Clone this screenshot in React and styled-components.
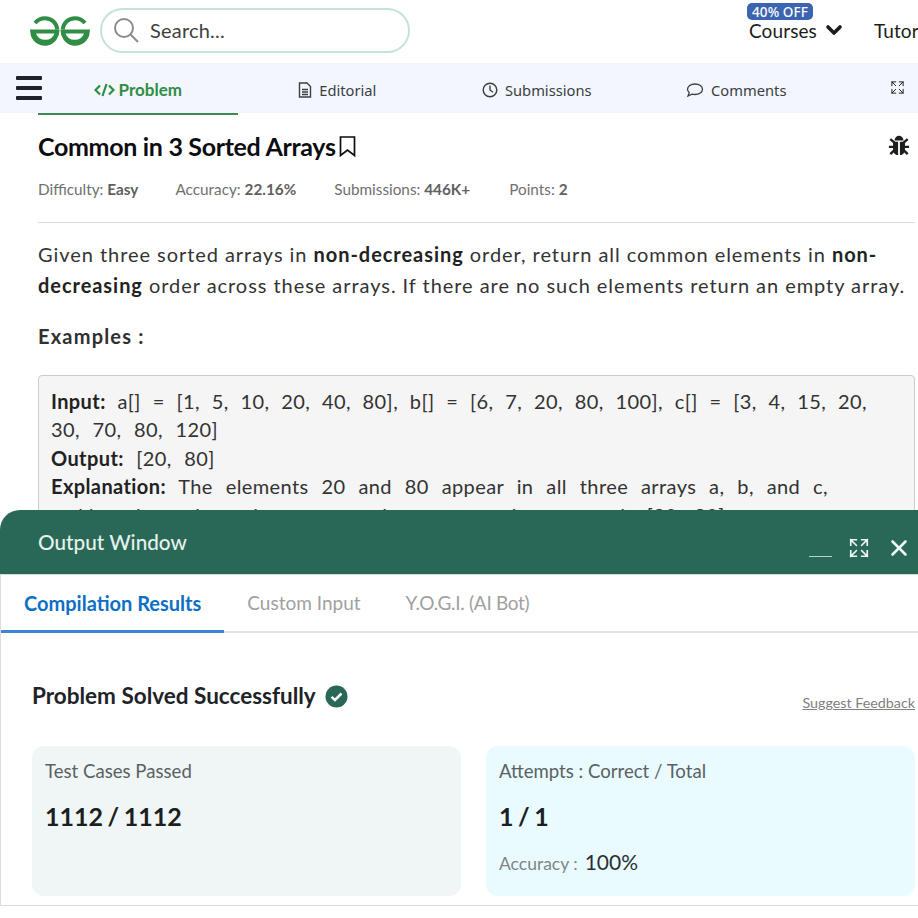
import React from "react";
import styled, { createGlobalStyle } from "styled-components";
import { ChevronDown, X } from "lucide-react";

const Global = createGlobalStyle`
  html, body { margin: 0; padding: 0; background: #fff; }
  * { box-sizing: border-box; }
  body { font-family: "Lato", "Noto Sans", sans-serif; }
`;
const round = `"Lato", "Noto Sans", sans-serif`;
const noto = `"Noto Sans", "Liberation Sans", sans-serif`;

const Page = styled.div`
  position: relative; width: 918px; height: 918px; overflow: hidden; background: #fff;
`;
const TopBar = styled.header`
  height: 63px; display: flex; align-items: flex-start; padding-left: 30px; position: relative; overflow: hidden;
`;
const Logo = styled.svg`
  width: 60px; height: 30px; margin-top: 16px; flex: none;
`;
const SearchBox = styled.div`
  width: 310px; height: 45px; margin: 8px 0 0 10px; border: 2px solid #c7e3d5; border-radius: 23px;
  display: flex; align-items: center; padding-left: 11px; gap: 10px;
  font: 400 20px/24px ${round}; letter-spacing: 0.2px; color: #3f3f3f; flex: none;
  span { margin-top: -2px; }
`;
const NavLinks = styled.nav`
  margin-left: 339px; display: flex; gap: 28px; flex: none; padding-top: 19px;
`;
const NavLink = styled.div`
  position: relative; display: flex; align-items: center; gap: 5px; height: 22px;
  font: 400 19px ${round}; letter-spacing: 0.1px; color: #1c1c1c; white-space: nowrap;
`;
const Badge = styled.span`
  position: absolute; left: -2px; top: -16px; height: 17px; width: 66px; background: #3b65b0; color: #fff;
  border-radius: 5px; font: 500 13.5px ${noto}; display: flex; align-items: center; justify-content: center;
`;
const TabBar = styled.div`
  height: 50px; background: #f3f6fc; display: flex; padding-left: 38px; position: relative;
`;
const Hamburger = styled.div`
  position: absolute; left: 16px; top: 13px; width: 26px; height: 24px;
  display: flex; flex-direction: column; justify-content: space-between;
  span { display: block; height: 4px; background: #1e2229; border-radius: 1px; }
`;
const Tab = styled.div`
  width: 199.5px; height: 52px; padding-top: ${p => (p.$active ? 3 : 4)}px; display: flex; align-items: center; justify-content: center; gap: ${p => p.$gap || 7}px;
  font: ${p => (p.$active ? `700 17px ${round}` : `400 14.7px ${noto}`)};
  color: ${p => (p.$active ? "#2f8d46" : "#3a3f45")};
  border-bottom: 2px solid ${p => (p.$active ? "#3d8b50" : "transparent")};
`;
const ExpandSlot = styled.div`
  margin-left: auto; padding: 16px 13px 0 0; color: #22262b;
`;
const Problem = styled.section`
  padding: 0 3px 0 38px;
`;
const TitleRow = styled.div`
  height: 66px; padding-top: 16px; display: flex; align-items: flex-start; justify-content: space-between;
`;
const Title = styled.h1`
  margin: 0; display: flex; align-items: center; gap: 3px; font: 700 25px/34px ${round}; letter-spacing: -0.32px; color: #0c0d10;
`;
const Bug = styled.svg`
  width: 22px; height: 22px; margin: 5px 5px 0 0;
`;
const Meta = styled.div`
  display: flex; height: 44px; border-bottom: 1px solid #dedede;
`;
const MetaItem = styled.div`
  font: 400 15.300px/20px ${round}; color: #707070; white-space: pre; margin-right: ${p => p.$gap}px;
  b { font-weight: 700; color: #606060; }
`;
const Para = styled.p`
  margin: 16px 0 0; font: 400 20px/31px ${round}; color: #333; width: 874px; letter-spacing: 0.95px;
  b { font-weight: 700; color: #222; }
`;
const Sub = styled.h3`
  margin: 20px 0 0; font: 700 20px/31px ${round}; letter-spacing: 1.2px; color: #303030;
`;
const Example = styled.div`
  margin-top: 23px; height: 200px; background: #f5f5f5; border: 1px solid #ccc; border-radius: 4px;
  padding: 11px 12px; font: 400 20px/28.4px ${round}; letter-spacing: 0.4px; color: #333;
  b { font-weight: 700; color: #222; }
`;
const Justified = styled.div`
  text-align: justify; text-align-last: justify; padding-right: ${p => p.$pr}px;
`;
const OutputLine = styled.div`
  word-spacing: 7px;
`;
const Output = styled.section`
  position: absolute; left: 0; top: 510px; width: 918px; height: 396px; background: #fff;
  border-left: 1px solid #ddd; border-bottom: 1px solid #ddd; border-radius: 20px 0 0 0;
`;
const OutHead = styled.div`
  margin-left: -1px; height: 65px; background: #296857; border-radius: 20px 0 0 0; display: flex; align-items: center;
  padding: 0 6px 0 38px; color: #eef6f3; border-bottom: 1px solid #cfe0da;
`;
const OutTitle = styled.div`
  font: 500 20.700px ${round}; color: #e6f1ed;
`;
const WinTools = styled.div`
  margin-left: auto; display: flex; align-items: center; gap: 16px; padding-top: 11px;
`;
const MinBar = styled.span`
  display: block; width: 23px; height: 1.500px; background: #b8d2c9; margin-top: 18px;
`;
const OutTabs = styled.div`
  height: 58px; display: flex; border-bottom: 2px solid #e2e2e2;
`;
const OutTab = styled.div`
  height: 58px; margin-bottom: -2px; padding: 0 ${p => p.$pr}px 0 ${p => p.$pl}px; display: flex; align-items: center;
  font: ${p => (p.$active ? "700 20px" : "400 19px")} ${round}; letter-spacing: ${p => p.$ls || 0}px; color: ${p => (p.$active ? "#0d6fc4" : "#a0a0a0")};
  border-bottom: 3px solid ${p => (p.$active ? "#3d85d0" : "transparent")}; white-space: nowrap;
`;
const Result = styled.div`
  padding: 0 2px 0 31px;
`;
const ResultHead = styled.div`
  height: 113px; display: flex; align-items: flex-start; justify-content: space-between;
`;
const Solved = styled.div`
  margin-top: 48px; display: flex; align-items: center; gap: 9px; font: 700 22.500px/30px ${round}; color: #1e2328;
`;
const Feedback = styled.a`
  margin-top: 60px; margin-right: 1px; font: 400 14.300px/20px ${round}; color: #808080; text-decoration: underline;
`;
const Cards = styled.div`
  display: grid; grid-template-columns: 429px 429px; gap: 25px;
`;
const Card = styled.div`
  height: 150px; border-radius: 12px; background: ${p => p.$bg}; padding: 12px 13px;
`;
const CardLabel = styled.div`
  font: 400 18.600px/26px ${round}; color: #5a6163;
`;
const CardValue = styled.div`
  margin-top: 17px; font: 700 25px/30px ${round}; word-spacing: -1.500px; color: #1b1f22;
`;
const AccRow = styled.div`
  margin-top: 18px; display: flex; align-items: baseline; gap: 7px;
  font: 400 17.500px/26px ${round}; color: #7f8688;
  b { font-weight: 400; font-size: 21px; color: #2a2f33; }
`;

const Expand = ({ size, w = 1.6 }) => (
  <svg width={size} height={size} viewBox="0 0 24 24" fill="none" stroke="currentColor" strokeWidth={w} strokeLinecap="square">
    <path d="M3 9V3h6M3 3l6 6M21 9V3h-6M21 3l-6 6M3 15v6h6M3 21l6-6M21 15v6h-6M21 21l-6-6" />
  </svg>
);

const LogoHalf = ({ flip }) => (
  <g transform={flip ? "matrix(-1 0 0 1 60 0)" : undefined} fill="#2f8d46">
    <path fillRule="evenodd" d="M0 13.500H29.500A14.800 15.500 0 0 1 .8 19.500ZM6 17.500H24.500A9.800 9.500 0 0 1 6 17.500Z" />
    <path d="M5 7C7.500 3.800 11 2.200 15 2.200c6.500 0 11.500 4.500 12.300 11.300" fill="none" stroke="#2f8d46" strokeWidth="4" />
  </g>
);

export default function App() {
  return (
    <Page>
      <Global />
      <TopBar>
        <Logo viewBox="0 0 60 30">
          <LogoHalf />
          <LogoHalf flip />
        </Logo>
        <SearchBox>
          <svg width="27" height="27" viewBox="0 0 27 27" fill="none" stroke="#8b8b8b" strokeWidth="2">
            <circle cx="11" cy="11" r="9" /><path d="M17.500 17.500 25 25" />
          </svg>
          <span>Search...</span>
        </SearchBox>
        <NavLinks>
          <NavLink><Badge>40% OFF</Badge>Courses<ChevronDown size={24} strokeWidth={3.6} /></NavLink>
          <NavLink>Tutorials</NavLink>
        </NavLinks>
      </TopBar>
      <TabBar>
        <Hamburger><span /><span /><span /></Hamburger>
        <Tab $active $gap={4}>
          <svg width="21" height="14" viewBox="0 0 21 14" fill="none" stroke="#2f8d46" strokeWidth="2.2">
            <path d="M6 2.500 1.500 7 6 11.500M15 2.500 19.500 7 15 11.500M12.500 1 8.500 13" />
          </svg>
          Problem
        </Tab>
        <Tab>
          <svg width="14" height="16" viewBox="0 0 14 16" fill="none" stroke="#3a3f45" strokeWidth="1.4">
            <path d="M1.500 1h7.500l3.500 3.500V15h-11zM4 7.500h6M4 10h6M4 12.500h6" />
          </svg>
          Editorial
        </Tab>
        <Tab>
          <svg width="16" height="16" viewBox="0 0 16 16" fill="none" stroke="#3a3f45" strokeWidth="1.4">
            <circle cx="8" cy="8" r="6.800" /><path d="M8 3.500V8l3 2.200" />
          </svg>
          Submissions
        </Tab>
        <Tab>
          <svg width="18" height="16" viewBox="0 0 18 16" fill="none" stroke="#3a3f45" strokeWidth="1.3">
            <path d="M9 2C4.800 2 1.500 4.300 1.500 7.300c0 1.300.6 2.400 1.700 3.300L2 14l4-1.900c1 .3 2 .4 3 .4 4.200 0 7.500-2.300 7.500-5.200S13.200 2 9 2z" />
          </svg>
          Comments
        </Tab>
        <ExpandSlot><Expand size={15} /></ExpandSlot>
      </TabBar>
      <Problem>
        <TitleRow>
          <Title>
            Common in 3 Sorted Arrays
            <svg width="17" height="21" viewBox="0 0 17 21" fill="none" stroke="#0c0d10" strokeWidth="1.7">
              <path d="M1.500 1h14v18.500l-7-5.500-7 5.500z" />
            </svg>
          </Title>
          <Bug viewBox="0 0 24 24" fill="#1b1f22">
            <path d="M7 7c.5-3 2.500-5 5-5s4.500 2 5 5z" />
            <path d="M5.500 8.500H11V23c-3.500-.3-5.500-2.800-5.500-6.500zM13 8.500h5.500v8c0 3.700-2 6.200-5.500 6.500z" />
            <path d="M2.500 5.500 7 9.500M21.500 5.500 17 9.500M1 14h5M18 14h5M2.500 22l4.500-4.500M21.500 22 17 17.500" stroke="#1b1f22" strokeWidth="2.600" />
          </Bug>
        </TitleRow>
        <Meta>
          <MetaItem $gap={37}>Difficulty: <b>Easy</b></MetaItem>
          <MetaItem $gap={38}>Accuracy: <b>22.16%</b></MetaItem>
          <MetaItem $gap={39}>Submissions: <b>446K+</b></MetaItem>
          <MetaItem $gap={0}>Points: <b>2</b></MetaItem>
        </Meta>
        <Para>
          Given three sorted arrays in <b>non-decreasing</b> order, return all common elements in <b>non-decreasing</b> order across these arrays. If there are no such elements return an empty array.
        </Para>
        <Sub>Examples :</Sub>
        <Example>
          <Justified $pr={35}><b>Input:</b> a[] = [1, 5, 10, 20, 40, 80], b[] = [6, 7, 20, 80, 100], c[] = [3, 4, 15, 20,</Justified>
          <OutputLine>30, 70, 80, 120]</OutputLine>
          <OutputLine><b>Output:</b> [20, 80]</OutputLine>
          <Justified $pr={74}><b>Explanation:</b> The elements 20 and 80 appear in all three arrays a, b, and c,</Justified>
          <Justified $pr={172}>making them the only common elements, so the output is [20, 80].</Justified>
        </Example>
      </Problem>
      <Output>
        <OutHead>
          <OutTitle>Output Window</OutTitle>
          <WinTools>
            <MinBar />
            <Expand size={22} w={1.8} />
            <X size={26} strokeWidth={2.4} />
          </WinTools>
        </OutHead>
        <OutTabs>
          <OutTab $active $pl={23} $pr={23}>Compilation Results</OutTab>
          <OutTab $pl={23} $pr={22}>Custom Input</OutTab>
          <OutTab $pl={23} $pr={0} $ls={-0.3}>Y.O.G.I. (AI Bot)</OutTab>
        </OutTabs>
        <Result>
          <ResultHead>
            <Solved>
              Problem Solved Successfully
              <svg width="23" height="23" viewBox="0 0 23 23">
                <circle cx="11.500" cy="11.500" r="11" fill="#296857" />
                <path d="M6.500 11.800 10 15l6.500-6.500" fill="none" stroke="#fff" strokeWidth="2.500" />
              </svg>
            </Solved>
            <Feedback>Suggest Feedback</Feedback>
          </ResultHead>
          <Cards>
            <Card $bg="#f0f6f5">
              <CardLabel>Test Cases Passed</CardLabel>
              <CardValue>1112 / 1112</CardValue>
            </Card>
            <Card $bg="#e9fbff">
              <CardLabel>Attempts : Correct / Total</CardLabel>
              <CardValue>1 / 1</CardValue>
              <AccRow>Accuracy : <b>100%</b></AccRow>
            </Card>
          </Cards>
        </Result>
      </Output>
    </Page>
  );
}
